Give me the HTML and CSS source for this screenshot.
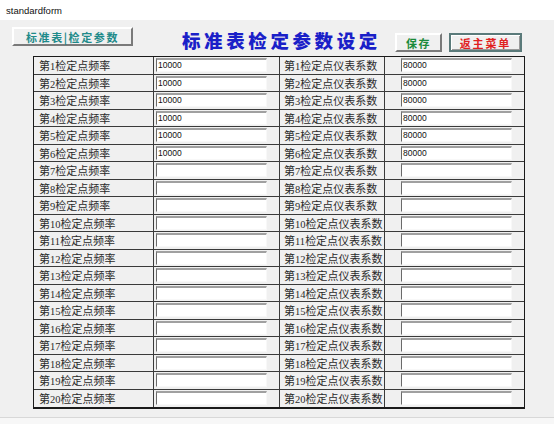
FILE: index.html
```html
<!DOCTYPE html>
<html lang="zh">
<head>
<meta charset="utf-8">
<link rel="stylesheet" href="styles.css">
</head>
<body>
<div class="window">
  <div class="titlebar">standardform</div>
  <div class="client">
    <div class="toolbar">
      <button class="btn btn-tab">标准表|检定参数</button>
      <div class="title">标准表检定参数设定</div>
      <button class="btn btn-save">保存</button>
      <button class="btn btn-back">返主菜单</button>
    </div>
    <div class="grid" id="grid"></div>
  </div>
</div>
<script src="app.js"></script>
</body>
</html>
```

FILE: app.js
```js
var g = document.getElementById('grid');
var html = '';
for (var i = 1; i <= 20; i++) {
  var f = i <= 6 ? '10000' : '';
  var k = i <= 6 ? '80000' : '';
  html += '<div class="cell lbl">第<span class="num">' + i + '</span>检定点频率</div>' +
    '<div class="cell inp c2"><div class="field">' + f + '</div></div>' +
    '<div class="cell lbl">第<span class="num">' + i + '</span>检定点仪表系数</div>' +
    '<div class="cell inp c4"><div class="field">' + k + '</div></div>';
}
g.innerHTML = html;
```

FILE: styles.css
```css
html, body {
  margin: 0;
  padding: 0;
  background: #f0f0f0;
}
.window {
  width: 554px;
  height: 424px;
  box-sizing: border-box;
  display: flex;
  flex-direction: column;
  font-family: "Noto Sans CJK SC", "Liberation Sans", sans-serif;
}
.titlebar {
  height: 20px;
  line-height: 22px;
  padding-left: 6px;
  background: #ffffff;
  font-family: "Liberation Sans", "Noto Sans", sans-serif;
  font-size: 9.5px;
  color: #111;
}
.client {
  flex: 1;
  background: #f0f0f0;
  border-bottom: 6px solid #f7f7f7;
  box-shadow: inset 0 -1px 0 #d8d8d8;
}
.toolbar {
  height: 36px;
  display: flex;
  align-items: flex-start;
}
.btn {
  font-family: "Noto Sans CJK SC", sans-serif;
  font-weight: 700;
  padding: 0;
  background: #f0f0f0;
  border: 2px solid;
  border-color: #ffffff #7a7a7a #7a7a7a #ffffff;
  box-sizing: border-box;
}
.btn-tab {
  margin: 7px 0 0 12px;
  width: 121px;
  height: 19px;
  font-size: 11px;
  letter-spacing: 1.6px;
  color: #1f8a8a;
  line-height: 14px;
}
.title {
  margin: 9px 0 0 49px;
  font-size: 18.5px;
  font-weight: 900;
  color: #1a20c8;
  letter-spacing: 3.6px;
  line-height: 22px;
}
.btn-save {
  margin: 13px 0 0 14px;
  width: 47px;
  height: 19px;
  font-size: 11px;
  letter-spacing: 1.5px;
  color: #1a8a3a;
}
.btn-back {
  margin: 13px 0 0 7px;
  width: 73px;
  height: 19px;
  font-size: 11px;
  letter-spacing: 1.8px;
  color: #e02020;
  border: 2px solid #5a7a7a;
  box-shadow: inset 1px 1px 0 #ffffff, inset -1px -1px 0 #9a9a9a;
}
.grid {
  margin-left: 33px;
  width: 492px;
  box-sizing: border-box;
  display: grid;
  grid-template-columns: 120px 126px 105px 1fr;
  grid-auto-rows: 17.5px;
  border: 1.5px solid #1a1a1a;
  border-top: 1px solid #1a1a1a;
  border-bottom: 2px solid #1a1a1a;
  background: #f0f0f0;
}
.cell {
  box-sizing: border-box;
  border-right: 1px solid #3a3a3a;
  border-bottom: 1px solid #3a3a3a;
  overflow: hidden;
}
.cell:nth-child(4n) { border-right: none; }
.cell:nth-last-child(-n+4) { border-bottom: none; }
.lbl {
  font-size: 11px;
  line-height: 16px;
  padding-left: 5px;
  color: #2a2a2a;
  white-space: nowrap;
}
.cell:nth-child(4n+3) { padding-left: 4px; }
.num {
  font-family: "Liberation Serif", serif;
  font-size: 10.5px;
}
.inp {
  display: flex;
  align-items: center;
}
.c2 { padding-left: 2px; }
.c4 { padding-left: 16px; }
.field {
  width: 111px;
  height: 14px;
  box-sizing: border-box;
  background: #ffffff;
  border-top: 2px solid #a0a0a0;
  border-left: 1px solid #6a6a6a;
  border-right: 1px solid #f8f8f8;
  border-bottom: 1px solid #f8f8f8;
  font-family: "Liberation Sans", sans-serif;
  font-size: 8.5px;
  line-height: 10px;
  padding-left: 1px;
  color: #111;
}
```
